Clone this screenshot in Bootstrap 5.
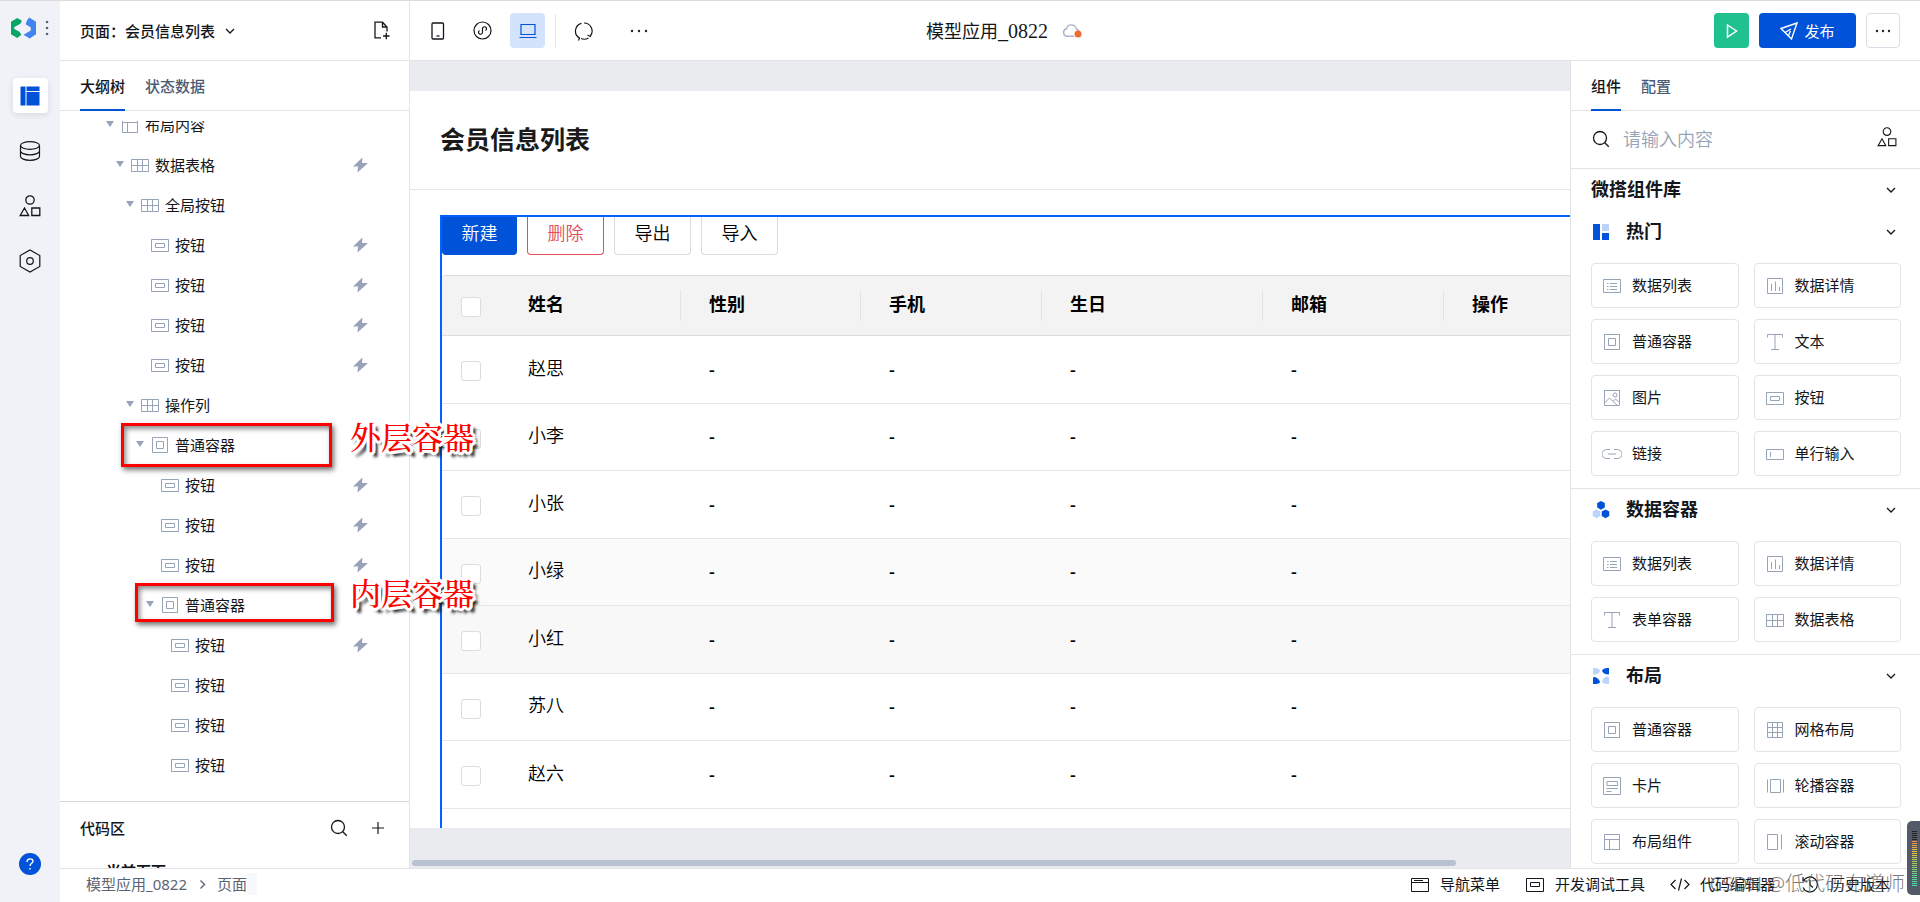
<!DOCTYPE html>
<html lang="zh-CN">
<head>
<meta charset="utf-8">
<meta name="viewport" content="width=device-width, initial-scale=1">
<title>模型应用_0822</title>
<link href="https://cdn.jsdelivr.net/npm/bootstrap@5.3.0/dist/css/bootstrap.min.css" rel="stylesheet">
<style>
  :root { --line:#e2e4ea; --blue:#0052d9; --muted:#97a3b7; --ink:#13161b; }
  body { font-family:"Noto Sans","Noto Sans CJK SC",sans-serif; font-size:15px; line-height:20px; color:var(--ink); border-top:1px solid #dcdcdf; background:#fff; }
  svg { display:block; flex:none; }
  svg:not([fill]) { fill:none; }
  svg:not([stroke]) { stroke:currentColor; }
  button { color:inherit; }
  .plain { border:0; background:none; padding:0; }
  a { color:inherit; text-decoration:none; }
  .rail { width:60px; background:#f0f2f7; }
  .rail-logo { height:46px; padding:0 11px; gap:9px; }
  .tile { width:35px; height:35px; border-radius:4px; display:flex; align-items:center; justify-content:center; }
  .rail .tile.on { background:#fff; color:var(--blue); box-shadow:0 2px 6px rgba(30,40,70,.12); }
  .rail-nav { gap:20px; margin-top:27px; }
  .rail-help { margin-bottom:27px; }
  .topbar { height:60px; border-bottom:1px solid var(--line); }
  .side { width:350px; border-right:1px solid var(--line); }
  .bar-side { padding:0 19px 0 20px; }
  .bar-tools { gap:10px; padding-left:10px; }
  .tool-more { margin-left:10px; }
  .tool-on { background:#d4e3fc; color:var(--blue); }
  .vline { width:1px; height:34px; background:var(--line); }
  .app-name { font-size:18px; margin-left:48px; }
  .app-name .num { font-family:"Liberation Serif",serif; font-size:20px; }
  .cloud-wrap { width:20px; margin-left:14px; }
  .btn-run, .btn-pub, .btn-dots { height:35px; border-radius:4px; display:flex; align-items:center; justify-content:center; }
  .btn-run { width:35px; background:#1fc28f; color:#fff; }
  .btn-pub { width:97px; background:var(--blue); color:#fff; gap:6px; }
  .btn-dots { width:34px; border:1px solid #dadde5; }
  .tabs { height:50px; padding-left:20px; gap:20px; border-bottom:1px solid var(--line); color:#4b5b76; font-weight:500; }
  .tabs .nav-link { padding:2px 0 0; height:50px; color:inherit; border-bottom:2px solid transparent; display:flex; align-items:center; }
  .tabs .nav-link.active { color:var(--ink); border-color:var(--blue); }
  .panel { z-index:2; }
  .tree { margin-top:10px; overflow:hidden; flex:1 1 0; }
  .tree ul { margin:-16px 0 0; }
  .tree li { height:40px; display:flex; align-items:center; padding-left:calc(45px + 10px * var(--d)); padding-right:41px; }
  .tree li svg { color:var(--muted); }
  .tree .arrow { width:10px; height:10px; margin-top:-2px; fill:var(--muted); stroke:none; }
  .tree .ico { width:20px; height:20px; margin-left:5px; margin-right:5px; }
  .tree .bolt { width:15px; height:16px; margin-left:auto; fill:var(--muted); stroke:none; }
  .code { height:67px; border-top:1px solid #d5d9e2; padding:0 25px 0 20px; overflow:hidden; }
  .code-head { height:51px; font-weight:500; }
  .code-item { padding-left:26px; padding-top:8px; font-weight:700; }
  .d0{--d:0}.d1{--d:1}.d2{--d:2}.d3{--d:3}.d4{--d:4}.d5{--d:5}
  /* marks laid over the outline tree */
  .note-box { position:absolute; border:3px solid #f00; box-shadow:2px 3px 5px rgba(0,0,0,.55), inset 2px 3px 5px rgba(0,0,0,.45); }
  .note-a { left:61px; top:362px; width:211px; height:44px; }
  .note-b { left:75px; top:522px; width:199px; height:39px; }
  .note-txt { position:absolute; left:290px; font-family:"Noto Serif CJK SC","Noto Sans CJK SC",serif; font-size:31px; font-weight:500; line-height:36px; color:#f00; white-space:nowrap;
    text-shadow:2px 0 #fff,-2px 0 #fff,0 2px #fff,0 -2px #fff,2px 2px #fff,-2px 2px #fff,2px -2px #fff,-2px -2px #fff,3px 1px #fff,-3px 1px #fff,3px -1px #fff,-3px -1px #fff,1px 3px #fff,-1px 3px #fff,1px -3px #fff,-1px -3px #fff,5px 5px 3px rgba(0,0,0,.8),4px 4px 3px rgba(0,0,0,.7); }
  .note-ta { top:357px; } .note-tb { top:513px; }
  .stage { background:#eaebef; padding-top:30px; overflow:hidden; min-width:0; }
  .sheet { background:#fff; overflow:hidden; }
  .sheet-title { height:99px; border-bottom:1px solid #e7e7e7; padding:0 0 3px 30px; font-size:25px; line-height:32px; font-weight:700; color:#1a1a1a; margin:0; }
  .picked { margin:25px 0 0 30px; border:2px solid #0062ff; border-width:2px 0 0 2px; width:1400px; }
  .acts { gap:10px; margin-bottom:20px; }
  .act { width:77px; height:38px; border:1px solid #dcdcdc; border-top:0; border-radius:0 0 4px 4px; background:#fff; font-size:18px; line-height:22px; padding:0 0 6px; font-weight:350; color:#000; }
  .act.new { width:75px; background:var(--blue); border-color:var(--blue); color:#fff; }
  .act.del { border-color:#e34d59; color:#e34d59; }
  .grid-tbl { table-layout:fixed; width:1398px; border-collapse:separate; border-spacing:0; font-size:18px; color:#000; }
  .grid-tbl th { height:61px; background:#f3f3f3; border-top:1px solid #dcdcdc; border-bottom:1px solid #dcdcdc; padding:0 0 0 28px; font-weight:700; }
  .grid-tbl thead th:first-child { border-top-left-radius:4px; }
  .grid-tbl th div { height:31px; line-height:29px; border-right:1px solid #e4e4e4; }
  .grid-tbl td div { padding-bottom:2px; }
  .grid-tbl th:last-child div { border:0; }
  .grid-tbl td { height:68px; border-bottom:1px solid #e7e7e7; padding:0 0 2px 28px; font-weight:350; }
  .grid-tbl th:first-child, .grid-tbl td:first-child { padding:0 0 0 19px; }
  .grid-tbl td.dash { font-weight:500; }
  .grid-tbl tbody tr:nth-child(even) td { height:67px; }
  .grid-tbl tbody tr:nth-child(4) td { background:#fafafa; }
  .grid-tbl tbody tr:nth-child(5) td { background:#f8f8f8; }
  .tick { appearance:none; display:block; width:20px; height:20px; margin:3px 0 0; border:1px solid #dcdcdc; border-radius:3px; background:#fff; }
  .grid-end { height:20px; }
  .hbar { height:6px; border-radius:3px; background:#b9c2d0; width:90%; margin:32px 0 2px 2px; }
  .lib { width:350px; border-left:1px solid var(--line); overflow:hidden; }
  .find { height:58px; padding:0 23px 2px 21px; border-bottom:1px solid var(--line); }
  .find input { border:0; outline:0; font-size:18px; line-height:24px; padding:0; margin-left:13px; min-width:0; font-weight:350; }
  .find input::placeholder { color:var(--muted); opacity:1; }
  .lib-head { height:42px; font-size:18px; font-weight:700; padding:0 5px 1px 0; margin:0; }
  .lib-top { margin:0 19px 0 20px; }
  .lib-sec { padding:0 19px 12px 20px; border-bottom:1px solid var(--line); }
  .lib-sec .lib-head { margin-bottom:10px; }
  .lib-sec .lib-head .glyph { width:20px; height:20px; margin-right:15px; stroke:none; }
  .cards { display:grid; grid-template-columns:1fr 1fr; gap:11px 15px; }
  .comp { height:45px; border:1px solid var(--line); border-radius:4px; background:#fff; padding:0 10px; gap:10px; display:flex; align-items:center; text-align:left; }
  .comp svg { width:20px; height:20px; color:var(--muted); }
  .comp span { padding-bottom:2px; }
  .foot { height:34px; border-top:1px solid var(--line); padding:0 30px 3px 26px; }
  .crumbs { color:#5b6472; gap:9px; }
  .crumb-edge { width:10px; height:22px; background:#f7f8fb; margin-left:-9px; }
  .foot-tools { gap:25px; }
  .foot-tools button { display:flex; align-items:center; gap:10px; }
  .wmark { position:absolute; right:15px; bottom:5px; font-size:20px; line-height:26px; font-weight:300; color:rgba(80,80,80,.75); white-space:nowrap; }
  .meter { position:absolute; right:0; bottom:7px; width:13px; height:74px; border-radius:5px 0 0 5px; background:#555a68; padding:9px 3px 9px 5px; z-index:5; }
  .meter div { height:56px; background:repeating-linear-gradient(#555a68 0 1px,transparent 1px 2px),linear-gradient(#222 0 18%,#f08040 19%,#e8c840 40%,#90d060 65%,#30e8b0); }
</style>
</head>
<body class="vh-100 overflow-hidden">
<svg width="0" height="0" class="position-absolute" aria-hidden="true">
  <symbol id="i-table" viewBox="0 0 20 20"><path d="M1.500 4.500h17v12h-17zM1.500 10.500h17M7.500 4.500v12M12.500 4.500v12"/></symbol>
  <symbol id="i-btn" viewBox="0 0 20 20"><path d="M1.500 4.500h17v12h-17zM5.500 8.500h9v4h-9z"/></symbol>
  <symbol id="i-box" viewBox="0 0 20 20"><path d="M2.500 2.500h15v15h-15zM6.500 6.500h7v7h-7z"/></symbol>
  <symbol id="i-layout" viewBox="0 0 20 20"><path d="M2.500 2.500h15v15h-15zM2.500 7.500h15M7.500 7.500v10"/></symbol>
  <symbol id="i-list" viewBox="0 0 20 20"><path d="M1.500 3.500h17v13h-17zM5 7.500h1.500M8 7.500h7M5 10.500h1.500M8 10.500h7M5 13.500h1.500M8 13.500h7"/></symbol>
  <symbol id="i-chart" viewBox="0 0 20 20"><path d="M2.500 2.500h15v15h-15zM6.500 8v7M10.500 5.500v9.500M14.500 11v4"/></symbol>
  <symbol id="i-text" viewBox="0 0 20 20"><path d="M2.500 5.500v-3h15v3M10 2.500v15M6 17.500h8"/></symbol>
  <symbol id="i-pic" viewBox="0 0 20 20"><path d="M2.500 2.500h15v15h-15zM2.500 15l5-5 8 7.500M11.500 13l2-2 4 3.500"/><circle cx="13" cy="7" r="2"/></symbol>
  <symbol id="i-link" viewBox="0 0 20 20"><path d="M8 5.500H4.500a4.500 4.500 0 0 0 0 9H8M12 5.500h3.500a4.500 4.500 0 0 1 0 9H12M6 10h8"/></symbol>
  <symbol id="i-input" viewBox="0 0 20 20"><path d="M1.500 5.500h17v10h-17zM5.500 8v5"/></symbol>
  <symbol id="i-grid" viewBox="0 0 20 20"><path d="M2.500 2.500h15v15h-15zM2.500 7.500h15M2.500 12.500h15M7.500 2.500v15M12.500 2.500v15"/></symbol>
  <symbol id="i-card" viewBox="0 0 20 20"><path d="M1.500 1.500h17v17h-17zM5 5.500h10.500v4H5zM4.500 12.500H16M4.500 15.500h5"/></symbol>
  <symbol id="i-slide" viewBox="0 0 20 20"><path d="M5.500 3.500h10v13h-10zM2.500 3.500v13M18.500 3.500v13"/></symbol>
  <symbol id="i-scroll" viewBox="0 0 20 20"><path d="M2.500 2.500h10v15h-10zM16.500 2.500v15"/></symbol>
  <symbol id="i-arrow" viewBox="0 0 10 10"><path d="M1 2h8L5 8z"/></symbol>
  <symbol id="i-bolt" viewBox="0 0 15 16"><path d="M9.500.5 0 9.500h5L4.500 15.500l10.500-9.500H9z"/></symbol>
  <symbol id="i-down" viewBox="0 0 10 10"><path d="m1 3 4 4 4-4" stroke-width="1.300"/></symbol>
  <symbol id="i-find" viewBox="0 0 18 18"><circle cx="8" cy="8" r="6.500" stroke-width="1.300"/><path d="m12.800 12.800 4 4" stroke-width="1.300"/></symbol>
  <symbol id="i-shapes" viewBox="0 0 22 22"><circle cx="11" cy="5" r="4.200"/><path d="m5.500 13 4.200 7.500H1.200zM12.800 13h8v7.500h-8z"/></symbol>
</svg>

<div class="d-flex h-100 position-relative overflow-hidden">
  <nav class="rail d-flex flex-column align-items-center flex-shrink-0">
    <div class="rail-logo d-flex align-items-center w-100 mt-1">
      <svg width="25" height="22" viewBox="0 0 24 20" fill="none" stroke="none"><path fill="#07a568" d="M0 4 6 .5 10.500 3 9 6 2.500 9.500v1L8 13.500l2 3L6 19.500l-6-3.500z"/><path fill="#4285f0" d="M17.500 0 24 4v12l-6 4-6-3.500L19 12.500v-3L14 6.500l1.500-4z"/><path fill="#07a568" d="M0 8l3-1v6l-3-1z"/></svg>
      <svg width="4" height="18" viewBox="0 0 4 18" stroke="none" fill="#5b6472"><circle cx="2" cy="3" r="1.300"/><circle cx="2" cy="9" r="1.300"/><circle cx="2" cy="15" r="1.300"/></svg>
    </div>
    <div class="rail-nav d-flex flex-column">
      <button class="plain tile on" aria-label="页面"><svg width="20" height="20" viewBox="0 0 20 20" stroke="none" fill="currentColor"><path d="M1 .5h4.500v19H1a.5.5 0 0 1-.5-.5V1zM6.500.5h13V5h-13zM6.500 6h13v13.500h-13z"/></svg></button>
      <button class="plain tile" aria-label="数据"><svg width="22" height="22" viewBox="0 0 22 22" stroke-width="1.200"><ellipse cx="11" cy="5.500" rx="9.500" ry="3.800"/><path d="M1.500 5.500v11c0 2 4 3.800 9.500 3.800s9.500-1.800 9.500-3.800v-11M1.500 11c0 2 4 3.800 9.500 3.800s9.500-1.800 9.500-3.800"/></svg></button>
      <button class="plain tile" aria-label="组件"><svg width="22" height="22" stroke-width="1.300"><use href="#i-shapes"/></svg></button>
      <button class="plain tile" aria-label="设置"><svg width="22" height="24" viewBox="0 0 22 24" stroke-width="1.200"><path d="m11 1 9.800 5.500v11L11 23l-9.800-5.500v-11z"/><circle cx="11" cy="12" r="3.300"/></svg></button>
    </div>
    <button class="plain rail-help mt-auto" aria-label="帮助"><svg width="22" height="22" viewBox="0 0 22 22" stroke="#fff"><circle cx="11" cy="11" r="11" fill="#0052d9" stroke="none"/><path d="M8 9c0-4 6-4 6-.8 0 2-3 2.300-3 4.800M11 15v1.500" stroke-width="1.400"/></svg></button>
  </nav>

  <div class="d-flex flex-column flex-grow-1" style="min-width:0">
    <header class="topbar d-flex align-items-center flex-shrink-0">
      <div class="d-flex align-items-center h-100" style="flex:1 1 0">
        <div class="side bar-side h-100 d-flex align-items-center flex-shrink-0">
          <button class="plain d-flex align-items-center fw-medium" style="gap:10px">页面：会员信息列表<svg width="10" height="10"><use href="#i-down"/></svg></button>
          <button class="plain ms-auto" aria-label="新建页面"><svg width="17" height="19" viewBox="0 0 17 19" stroke-width="1.300"><path d="M8 16.800H2V1.200h7.500L14 6v4.500M9.500 1.200V6H14M10 15h6.500M13.300 11.800v6.500"/></svg></button>
        </div>
        <div class="bar-tools d-flex align-items-center">
          <button class="plain tile" aria-label="手机"><svg width="14" height="18" viewBox="0 0 14 18" stroke-width="1.300"><rect x="1" y="1" width="11.500" height="16" rx="1"/><path d="M5.500 14h3"/></svg></button>
          <button class="plain tile" aria-label="小程序"><svg width="19" height="19" viewBox="0 0 19 19" stroke-width="1.200"><circle cx="9.500" cy="9.500" r="8.500"/><path d="M6.500 9.500a2 2 0 1 0 3 2v-4a2 2 0 1 1 3 2"/></svg></button>
          <button class="plain tile tool-on" aria-label="电脑"><svg width="18" height="16" viewBox="0 0 18 16" stroke-width="1.200"><path d="M2 1.500h14v10H2zM.5 14.500h17"/></svg></button>
          <span class="vline"></span>
          <button class="plain tile" aria-label="刷新"><svg width="20" height="20" viewBox="0 0 20 20" stroke-width="1.200"><path d="M5.500 17A8 8 0 0 1 7.500 2.300M10 2a8 8 0 0 1 6.300 13M14.500 17A8 8 0 0 1 7 17.500M3 15l2.500 2-1 2.500M17.500 12.500 16.300 15.500 13.500 14"/></svg></button>
          <button class="plain tile tool-more" aria-label="更多"><svg width="18" height="4" viewBox="0 0 18 4" stroke="none" fill="#222"><circle cx="2" cy="2" r="1.200"/><circle cx="9" cy="2" r="1.200"/><circle cx="16" cy="2" r="1.200"/></svg></button>
        </div>
      </div>
      <div class="app-name d-flex align-items-center">
        <span>模型应用<span class="num">_0822</span></span>
        <span class="cloud-wrap"><svg width="20" height="15" viewBox="0 0 20 15"><path d="M12 13.200H4.500a3.800 3.800 0 0 1 0-7.400 5 5 0 0 1 9.800.2 4 4 0 0 1 2.500 2" stroke="#a9b4c6" stroke-width="1.400"/><circle cx="16" cy="11" r="3.500" fill="#ee6c2f" stroke="none"/></svg></span>
      </div>
      <div class="d-flex align-items-center justify-content-end" style="flex:1 1 0; gap:10px; padding-right:20px">
        <button class="plain btn-run" aria-label="预览"><svg width="12" height="16" viewBox="0 0 12 16" stroke-width="1.500"><path d="m1.500 2 9 6-9 6z"/></svg></button>
        <button class="plain btn-pub"><svg width="18" height="18" viewBox="0 0 18 18" stroke-width="1.400"><path d="M17 1 1 6.500l4 4L11.500 17zM5 10.500l6-3.500M8.500 13.500l2-4.500"/></svg>发布</button>
        <button class="btn-dots bg-white p-0" aria-label="更多操作"><svg width="16" height="4" viewBox="0 0 16 4" stroke="none" fill="#222"><circle cx="2" cy="2" r="1.200"/><circle cx="8" cy="2" r="1.200"/><circle cx="14" cy="2" r="1.200"/></svg></button>
      </div>
    </header>

    <div class="d-flex flex-grow-1" style="min-height:0">
      <aside class="side panel bg-white d-flex flex-column flex-shrink-0 position-relative">
        <nav class="nav tabs flex-shrink-0"><a class="nav-link active" href="#">大纲树</a><a class="nav-link" href="#">状态数据</a></nav>
        <div class="tree">
          <ul class="list-unstyled">
            <li class="d0"><svg class="arrow"><use href="#i-arrow"/></svg><svg class="ico"><use href="#i-layout"/></svg>布局内容</li>
            <li class="d1"><svg class="arrow"><use href="#i-arrow"/></svg><svg class="ico"><use href="#i-table"/></svg>数据表格<svg class="bolt"><use href="#i-bolt"/></svg></li>
            <li class="d2"><svg class="arrow"><use href="#i-arrow"/></svg><svg class="ico"><use href="#i-table"/></svg>全局按钮</li>
            <li class="d3"><svg class="arrow"></svg><svg class="ico"><use href="#i-btn"/></svg>按钮<svg class="bolt"><use href="#i-bolt"/></svg></li>
            <li class="d3"><svg class="arrow"></svg><svg class="ico"><use href="#i-btn"/></svg>按钮<svg class="bolt"><use href="#i-bolt"/></svg></li>
            <li class="d3"><svg class="arrow"></svg><svg class="ico"><use href="#i-btn"/></svg>按钮<svg class="bolt"><use href="#i-bolt"/></svg></li>
            <li class="d3"><svg class="arrow"></svg><svg class="ico"><use href="#i-btn"/></svg>按钮<svg class="bolt"><use href="#i-bolt"/></svg></li>
            <li class="d2"><svg class="arrow"><use href="#i-arrow"/></svg><svg class="ico"><use href="#i-table"/></svg>操作列</li>
            <li class="d3"><svg class="arrow"><use href="#i-arrow"/></svg><svg class="ico"><use href="#i-box"/></svg>普通容器</li>
            <li class="d4"><svg class="arrow"></svg><svg class="ico"><use href="#i-btn"/></svg>按钮<svg class="bolt"><use href="#i-bolt"/></svg></li>
            <li class="d4"><svg class="arrow"></svg><svg class="ico"><use href="#i-btn"/></svg>按钮<svg class="bolt"><use href="#i-bolt"/></svg></li>
            <li class="d4"><svg class="arrow"></svg><svg class="ico"><use href="#i-btn"/></svg>按钮<svg class="bolt"><use href="#i-bolt"/></svg></li>
            <li class="d4"><svg class="arrow"><use href="#i-arrow"/></svg><svg class="ico"><use href="#i-box"/></svg>普通容器</li>
            <li class="d5"><svg class="arrow"></svg><svg class="ico"><use href="#i-btn"/></svg>按钮<svg class="bolt"><use href="#i-bolt"/></svg></li>
            <li class="d5"><svg class="arrow"></svg><svg class="ico"><use href="#i-btn"/></svg>按钮</li>
            <li class="d5"><svg class="arrow"></svg><svg class="ico"><use href="#i-btn"/></svg>按钮</li>
            <li class="d5"><svg class="arrow"></svg><svg class="ico"><use href="#i-btn"/></svg>按钮</li>
          </ul>
        </div>
        <div class="code flex-shrink-0">
          <div class="code-head d-flex align-items-center">代码区
            <button class="plain ms-auto" aria-label="搜索代码"><svg width="18" height="18"><use href="#i-find"/></svg></button>
            <button class="plain" style="margin-left:24px" aria-label="添加代码"><svg width="12" height="12" viewBox="0 0 12 12" stroke-width="1.200"><path d="M0 6h12M6 0v12"/></svg></button>
          </div>
          <div class="code-item">当前页面</div>
        </div>
        <div class="note-box note-a"></div><div class="note-txt note-ta">外层容器</div>
        <div class="note-box note-b"></div><div class="note-txt note-tb">内层容器</div>
      </aside>

      <main class="stage flex-grow-1 d-flex flex-column">
        <div class="sheet flex-grow-1" style="min-height:0">
          <h1 class="sheet-title d-flex align-items-center">会员信息列表</h1>
          <div class="picked">
            <div class="acts d-flex">
              <button class="act new">新建</button><button class="act del">删除</button><button class="act">导出</button><button class="act">导入</button>
            </div>
            <table class="grid-tbl">
              <colgroup><col style="width:58px"><col style="width:181px"><col style="width:180px"><col style="width:181px"><col style="width:221px"><col style="width:181px"><col></colgroup>
              <thead><tr><th><input class="tick" type="checkbox" aria-label="全选"></th><th><div>姓名</div></th><th><div>性别</div></th><th><div>手机</div></th><th><div>生日</div></th><th><div>邮箱</div></th><th><div>操作</div></th></tr></thead>
              <tbody>
                <tr><td><input class="tick" type="checkbox" aria-label="赵思"></td><td><div>赵思</div></td><td class="dash">-</td><td class="dash">-</td><td class="dash">-</td><td class="dash">-</td><td></td></tr>
                <tr><td><input class="tick" type="checkbox" aria-label="小李"></td><td><div>小李</div></td><td class="dash">-</td><td class="dash">-</td><td class="dash">-</td><td class="dash">-</td><td></td></tr>
                <tr><td><input class="tick" type="checkbox" aria-label="小张"></td><td><div>小张</div></td><td class="dash">-</td><td class="dash">-</td><td class="dash">-</td><td class="dash">-</td><td></td></tr>
                <tr><td><input class="tick" type="checkbox" aria-label="小绿"></td><td><div>小绿</div></td><td class="dash">-</td><td class="dash">-</td><td class="dash">-</td><td class="dash">-</td><td></td></tr>
                <tr><td><input class="tick" type="checkbox" aria-label="小红"></td><td><div>小红</div></td><td class="dash">-</td><td class="dash">-</td><td class="dash">-</td><td class="dash">-</td><td></td></tr>
                <tr><td><input class="tick" type="checkbox" aria-label="苏八"></td><td><div>苏八</div></td><td class="dash">-</td><td class="dash">-</td><td class="dash">-</td><td class="dash">-</td><td></td></tr>
                <tr><td><input class="tick" type="checkbox" aria-label="赵六"></td><td><div>赵六</div></td><td class="dash">-</td><td class="dash">-</td><td class="dash">-</td><td class="dash">-</td><td></td></tr>
              </tbody>
            </table>
            <div class="grid-end"></div>
          </div>
        </div>
        <div class="hbar flex-shrink-0"></div>
      </main>

      <aside class="lib bg-white flex-shrink-0">
        <nav class="nav tabs"><a class="nav-link active" href="#">组件</a><a class="nav-link" href="#">配置</a></nav>
        <div class="find d-flex align-items-center">
          <svg width="18" height="18"><use href="#i-find"/></svg>
          <input class="flex-grow-1" type="text" placeholder="请输入内容" aria-label="搜索组件">
          <svg width="20" height="20" class="mb-1" stroke-width="1.200"><use href="#i-shapes"/></svg>
        </div>
        <h2 class="lib-head lib-top d-flex align-items-center">微搭组件库<svg class="ms-auto" width="10" height="10"><use href="#i-down"/></svg></h2>
        <section class="lib-sec">
          <h3 class="lib-head d-flex align-items-center"><svg class="glyph" viewBox="0 0 20 20"><path fill="#0052d9" d="M2 2h7v16H2zM11 11h7v7h-7z"/><path fill="#bcd3fb" d="M11 2h7v7h-7z"/></svg>热门<svg class="ms-auto" width="10" height="10"><use href="#i-down"/></svg></h3>
          <div class="cards">
            <button class="comp"><svg><use href="#i-list"/></svg><span>数据列表</span></button>
            <button class="comp"><svg><use href="#i-chart"/></svg><span>数据详情</span></button>
            <button class="comp"><svg><use href="#i-box"/></svg><span>普通容器</span></button>
            <button class="comp"><svg><use href="#i-text"/></svg><span>文本</span></button>
            <button class="comp"><svg><use href="#i-pic"/></svg><span>图片</span></button>
            <button class="comp"><svg><use href="#i-btn"/></svg><span>按钮</span></button>
            <button class="comp"><svg><use href="#i-link"/></svg><span>链接</span></button>
            <button class="comp"><svg><use href="#i-input"/></svg><span>单行输入</span></button>
          </div>
        </section>
        <section class="lib-sec">
          <h3 class="lib-head d-flex align-items-center"><svg class="glyph" viewBox="0 0 20 20"><path fill="#0052d9" d="m10 1 3.800 2v4.500L10 9.800 6.200 7.500V3zM14.500 9.500l3.800 2V16l-3.800 2.300-3.800-2.300v-4.500z"/><path fill="#bcd3fb" d="m5.500 9.500 3.800 2V16l-3.800 2.300L1.700 16v-4.500z"/></svg>数据容器<svg class="ms-auto" width="10" height="10"><use href="#i-down"/></svg></h3>
          <div class="cards">
            <button class="comp"><svg><use href="#i-list"/></svg><span>数据列表</span></button>
            <button class="comp"><svg><use href="#i-chart"/></svg><span>数据详情</span></button>
            <button class="comp"><svg><use href="#i-text"/></svg><span>表单容器</span></button>
            <button class="comp"><svg><use href="#i-table"/></svg><span>数据表格</span></button>
          </div>
        </section>
        <section class="lib-sec">
          <h3 class="lib-head d-flex align-items-center"><svg class="glyph" viewBox="0 0 20 20"><path fill="#0052d9" d="M18 2v6.500C14 8.500 11.500 7 11 4.500 12 2.500 15 2 18 2zM2 18v-6.500l2-.5c3 1 4.500 3 5 5-.5 1.500-1.500 2-7 2z"/><path fill="#bcd3fb" d="M2 2c4 0 6 .5 7 2.500C8.500 7 7 8.500 2 8.500zM18 18c-4 0-6-.5-7-2 .5-3 2-5 5-5.500l2 1z"/></svg>布局<svg class="ms-auto" width="10" height="10"><use href="#i-down"/></svg></h3>
          <div class="cards">
            <button class="comp"><svg><use href="#i-box"/></svg><span>普通容器</span></button>
            <button class="comp"><svg><use href="#i-grid"/></svg><span>网格布局</span></button>
            <button class="comp"><svg><use href="#i-card"/></svg><span>卡片</span></button>
            <button class="comp"><svg><use href="#i-slide"/></svg><span>轮播容器</span></button>
            <button class="comp"><svg><use href="#i-layout"/></svg><span>布局组件</span></button>
            <button class="comp"><svg><use href="#i-scroll"/></svg><span>滚动容器</span></button>
          </div>
        </section>
      </aside>
    </div>

    <footer class="foot d-flex align-items-center flex-shrink-0 bg-white">
      <div class="crumbs d-flex align-items-center"><a href="#">模型应用_0822</a><svg width="12" height="12" viewBox="0 0 12 12" stroke-width="1.400"><path d="m4.500 2.500 4 4-4 4"/></svg><a href="#">页面</a><span class="crumb-edge"></span></div>
      <div class="foot-tools d-flex ms-auto">
        <button class="plain"><svg width="20" height="18" viewBox="0 0 20 18"><path d="M1.500 3.500h17v13h-17zM1.500 7.500h17M4 5.500h9"/></svg>导航菜单</button>
        <button class="plain"><svg width="20" height="18" viewBox="0 0 20 18"><path d="M1.500 3.500h17v13h-17zM5.500 7.500h9v4h-9z"/></svg>开发调试工具</button>
        <button class="plain"><svg width="20" height="18" viewBox="0 0 20 18" stroke-width="1.200"><path d="m5.500 5-4.500 4.500L5.500 14M14.500 5l4.500 4.500-4.500 4.500M11.500 3.500l-3 12"/></svg>代码编辑器</button>
        <button class="plain"><svg width="20" height="18" viewBox="0 0 20 18" stroke-width="1.200"><path d="M3.500 5.500a7.500 7.500 0 1 1-.5 7M3 2v4h4M10 5v5l3 2.500"/></svg>历史版本</button>
      </div>
    </footer>
  </div>
  <div class="wmark">CSDN @低代码布道师</div>
  <div class="meter"><div></div></div>
</div>
</body>
</html>
